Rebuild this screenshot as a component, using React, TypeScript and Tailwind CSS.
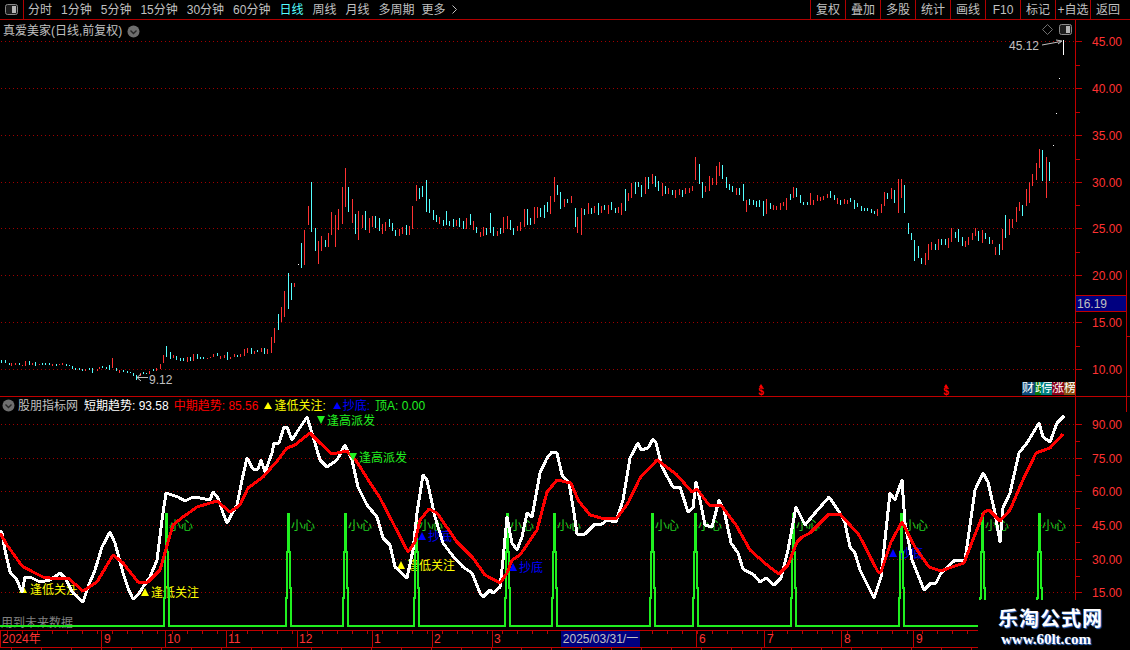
import React from 'react';

const LEFT_TABS = ['分时', '1分钟', '5分钟', '15分钟', '30分钟', '60分钟', '日线', '周线', '月线', '多周期'];
const RIGHT_TABS = ['复权', '叠加', '多股', '统计', '画线', 'F10', '标记', '+自选', '返回'];

const PRICE_LEVELS = [
  { y: 41, label: '45.00' }, { y: 88, label: '40.00' }, { y: 135, label: '35.00' }, { y: 182, label: '30.00' },
  { y: 228, label: '25.00' }, { y: 275, label: '20.00' }, { y: 322, label: '15.00' }, { y: 369, label: '10.00' },
];
const IND_LEVELS = [
  { y: 424, label: '90.00' }, { y: 458, label: '75.00' }, { y: 491, label: '60.00' },
  { y: 525, label: '45.00' }, { y: 559, label: '30.00' }, { y: 592, label: '15.00' },
];

// x top bottom colour, in crop units: [originX, originY, data]
const BARS: [number, number, string][] = [
  [0, 260, '4 300 309 c,16 300 309 c,26 309 315 c,34 309 318 r,46 309 315 r,56 309 315 c,65 315 318 r,76 303 318 r,86 303 315 c,97 309 315 r,106 306 318 c,116 312 315 r,127 309 315 c,136 309 315 c,146 309 315 c,157 312 318 r,167 312 318 c,176 312 315 r,187 309 315 r,197 312 318 c,207 315 318 c,217 318 327 c,226 324 330 c,238 324 330 c,247 327 333 c,256 327 333 r,268 324 330 c,277 324 339 c,290 327 333 r,298 321 327 r,307 318 324 c,319 321 327 c,328 315 330 c,337 294 324 r,349 324 333 c,358 330 339 r,370 330 336 c,380 333 339 c,389 336 339 c,400 339 348 c,409 345 360 c,419 339 348 r,430 336 342 c,439 339 342 c,448 333 342 r,460 327 333 c,469 324 333 r,481 312 327 r,490 285 309 r,499 258 291 c,511 276 297 c,520 285 294 r,529 288 300 c,541 294 303 c,550 294 303 c,562 291 306 r,571 291 303 c,580 282 303 r,592 282 297 c,601 291 297 c,610 291 297 c,622 294 297 r,631 291 294 r,640 282 291 r,652 279 288 c,661 288 297 r,673 285 294 r,682 276 300 c,691 291 297 r,703 282 291 r,712 285 291 c,721 282 291 r,733 267 288 r,742 264 279 r,754 264 282 c,763 273 282 r,772 270 276 c,784 264 276 r,793 264 282 c,802 267 282 r,814 231 279 r,823 204 249 r,835 162 210 c,844 141 186 r,853 93 171 r,865 39 147 c,874 69 120 c,883 69 81 r'],
  [280, 140, '55 372 375 w,64 309 384 c,73 270 375 r,85 198 255 r,94 126 276 c,106 264 333 c,115 303 372 r,124 288 333 r,136 300 321 c,145 279 321 r,154 216 285 r,166 225 321 r,175 207 270 r,187 141 252 r,196 84 201 r,205 141 216 c,217 177 249 r,226 222 282 c,235 213 300 r,247 225 264 r,256 213 270 c,268 234 279 r,277 228 261 r,286 228 264 c,298 234 273 c,307 252 282 r,316 246 273 r,328 237 261 c,337 249 273 c,346 270 288 c,358 267 288 r,367 261 282 r,379 255 285 c,388 258 285 r,397 198 267 r,409 135 183 r,418 144 177 c,427 138 171 c,439 120 216 c,448 177 219 c,460 210 240 c,469 225 246 c,478 231 252 r,490 240 258 c,499 213 255 c,508 243 258 c,520 237 261 c,529 240 258 r,538 234 261 c,550 243 267 c,559 234 267 r,571 222 255 c,580 243 270 r,589 261 279 c,601 276 291 r,610 261 288 r,619 264 285 c,631 219 279 c,640 261 288 c,652 273 288 r,661 264 282 c,670 231 279 r,682 228 267 r,691 240 270 c,700 264 285 c,712 258 273 r,721 246 273 r,733 207 261 r,742 207 255 c,751 234 255 c,763 201 252 r,772 201 234 r,781 204 231 c,793 195 234 c,802 186 216 c,811 168 222 r,823 111 186 r,832 135 165 c,841 156 207 c,853 177 201 r,862 177 189 c'],
  [570, 140, '4 168 189 r,14 204 261 c,22 231 279 r,34 204 285 r,43 207 225 c,55 189 222 r,64 204 222 c,73 198 219 r,85 189 225 c,94 198 219 r,103 195 210 c,115 195 222 r,124 186 210 c,136 204 219 c,145 201 219 r,154 189 225 r,166 147 213 c,175 159 183 r,184 129 174 r,196 126 162 c,205 126 141 c,214 135 171 c,226 111 162 r,235 111 147 c,247 102 132 r,256 108 141 c,265 123 153 c,277 129 168 r,286 138 162 c,295 144 162 r,307 150 165 c,316 150 174 r,328 147 165 r,337 150 171 c,346 144 162 r,358 144 159 r,367 138 153 r,376 51 120 r,388 72 132 c,397 126 174 c,406 138 156 r,418 108 153 r,427 114 135 r,439 78 135 r,448 66 108 r,457 75 117 c,469 111 144 c,478 132 150 c,487 138 156 c,499 144 165 r,508 144 165 c,520 132 183 c,529 180 216 r,538 177 195 c,550 180 195 c,559 183 201 c,568 180 201 c,580 183 228 c,589 177 222 r,601 189 207 c,610 195 210 r,619 198 210 r,631 189 210 r,640 186 198 r,649 174 210 r,661 162 180 c,670 141 174 r,679 144 171 c,691 165 189 c,700 186 195 c,712 186 195 c,721 159 195 r,730 180 195 r,742 165 183 r,751 171 183 r,760 168 180 r,772 162 174 r,781 153 174 c,793 165 180 c,802 174 192 r,811 180 195 c,823 177 192 r,832 180 192 r,841 174 186 c,853 180 207 c,862 189 201 c,873 198 213 c,883 204 213 c,892 204 213 c,904 207 219 c,913 213 222 c,922 207 228 r,934 192 219 r,943 156 198 r,952 159 177 c,964 144 177 r,973 150 189 c,985 117 219 r,994 117 174 r,1003 135 219 c,1015 249 282 c,1024 279 300 c,1033 300 363 c,1045 318 354 c,1054 354 372 c,1066 339 375 r,1075 312 360 r,1084 306 330 r,1096 312 330 c,1105 297 330 r,1114 297 315 c,1126 297 315 c,1135 294 324 r,1144 264 306 r,1156 276 294 c,1165 267 306 c,1177 291 318 c,1186 303 321 r,1195 291 315 r,1207 279 300 r,1216 264 288 r,1225 273 303 c,1237 270 309 r,1246 279 297 c,1258 291 312 c,1267 300 312 r,1276 321 345 r,1288 312 345 c,1297 267 330 r,1306 225 294 c,1318 237 285 r,1327 237 264 r,1339 201 246 r,1348 186 213 r,1357 195 228 c,1369 147 198 r,1378 126 189 r,1387 102 138 r,1399 69 120 r,1408 27 84 r,1417 30 123 c,1429 51 174 r,1438 66 123 c'],
];
const BAR_COLOR: Record<string, string> = { r: '#ff3232', c: '#54ffff', w: '#ffffff' };

const WHITE_LINE = '0,530 2,533 5,550 10,572 17,580 22,592 25,577 32,578 40,582 50,580 60,573 65,578 73,593 83,602 88,587 95,570 102,547 110,532 115,543 123,573 128,588 133,599 138,595 143,587 150,577 157,560 162,520 166,493 172,495 178,497 185,501 193,497 200,498 210,500 213,492 218,498 223,513 227,523 233,512 237,505 242,480 247,458 253,469 258,469 261,460 265,472 272,453 274,443 279,443 284,427 287,427 292,440 297,432 307,417 312,433 320,460 327,467 337,460 345,445 352,460 358,487 367,505 377,517 383,538 390,545 395,567 407,578 413,550 417,513 423,475 427,480 435,517 443,543 452,555 463,567 472,573 480,593 483,597 490,590 493,593 500,587 503,560 507,517 512,543 517,550 522,537 527,513 532,517 540,473 547,458 552,452 557,453 562,475 569,483 574,513 577,534 585,534 595,524 602,524 607,520 616,522 623,500 630,458 638,443 641,450 648,448 653,439 656,443 662,467 673,487 680,487 688,512 693,508 696,482 700,500 705,525 712,527 719,500 724,510 731,543 738,553 743,569 754,575 760,582 766,578 774,585 781,578 788,550 796,507 805,525 815,513 829,497 840,513 845,523 850,547 855,553 860,570 874,598 881,577 890,493 895,500 902,480 905,523 912,560 924,590 931,583 936,583 941,573 955,560 965,560 975,490 983,473 988,482 995,513 1000,542 1003,508 1010,493 1019,453 1027,443 1039,423 1043,437 1050,442 1057,423 1064,416';
const RED_LINE = '0,533 7,545 22,566 33,572 43,577 57,579 68,578 83,591 97,582 113,555 123,563 138,582 148,582 160,570 168,542 173,525 183,517 197,507 217,501 230,512 240,505 248,488 263,477 278,460 287,448 295,445 310,433 320,443 332,454 347,451 357,462 367,478 380,498 393,523 408,552 415,542 420,520 429,509 437,513 457,542 473,558 485,575 500,583 507,573 512,560 520,555 537,530 547,492 557,480 571,483 578,500 590,515 605,519 617,518 628,503 640,478 657,460 676,474 692,492 697,489 709,505 721,505 736,525 750,550 767,565 779,574 788,565 797,542 802,537 810,533 829,514 840,514 859,535 878,572 881,572 891,542 902,522 915,547 929,567 941,571 952,567 964,563 974,537 984,512 989,510 1000,521 1010,510 1022,482 1036,453 1050,448 1063,434';

const SPIKES = [166, 288, 345, 416, 507, 554, 652, 695, 793, 901, 982, 1039];

const MONTHS = [
  { x: 2, line: 0, t: '2024年' }, { x: 104, line: 101, t: '9' }, { x: 167, line: 165, t: '10' }, { x: 228, line: 226, t: '11' },
  { x: 299, line: 297, t: '12' }, { x: 374, line: 372, t: '1' }, { x: 434, line: 432, t: '2' }, { x: 494, line: 492, t: '3' },
  { x: 699, line: 696, t: '6' }, { x: 767, line: 764, t: '7' }, { x: 844, line: 841, t: '8' }, { x: 916, line: 913, t: '9' },
];

const Pair = ({ x, y, tri, text, color, down }: { x: number; y: number; tri: number; text: string; color: string; down?: boolean }) => (
  <g fill={color}>
    <polygon points={down ? `${tri - 4},${y - 4} ${tri + 4},${y - 4} ${tri},${y + 4}` : `${tri - 4},${y + 4} ${tri + 4},${y + 4} ${tri},${y - 4}`} />
    <text x={x} y={y + 5} fontSize="12">{text}</text>
  </g>
);

const ChevronDot = () => (
  <svg width="13" height="13" viewBox="0 0 13 13" className="shrink-0">
    <circle cx="6.5" cy="6.5" r="6" fill="#6e6e6e" />
    <path d="M3.5 5.5 L6.5 8.5 L9.5 5.5" fill="none" stroke="#262626" strokeWidth="1.4" />
  </svg>
);

const PanelIcon = () => (
  <svg width="13" height="11" viewBox="0 0 13 11">
    <rect x="0.5" y="0.5" width="12" height="10" rx="2" fill="#1c1c1c" stroke="#8a8a8a" />
    <rect x="7" y="2" width="4" height="7" fill="#b5b5b5" />
  </svg>
);

const Tri = () => (
  <svg width="8" height="7" viewBox="0 0 8 7" className="mr-[2px] fill-current"><polygon points="4,0 8,7 0,7" /></svg>
);

const Grid = ({ levels }: { levels: { y: number }[] }) => (
  <g stroke="#a00000" strokeDasharray="1 3" shapeRendering="crispEdges">
    {levels.map((l) => <line key={l.y} x1="1" x2="1075" y1={l.y + 0.5} y2={l.y + 0.5} />)}
  </g>
);

const Axis = ({ levels, top }: { levels: { y: number; label: string }[]; top: number }) => (
  <>
    <svg className="absolute left-0 top-0" width="14" height="100%">
      {levels.map((l, i) => (
        <g key={l.y} fill="#c00000">
          <rect x="0" y={l.y - top} width="6" height="1" />
          {i < levels.length - 1 && <rect x="0" y={Math.round((l.y + levels[i + 1].y) / 2) - top} width="4" height="1" />}
        </g>
      ))}
    </svg>
    {levels.map((l) => (
      <div key={l.y} className="absolute left-[15px] w-[31px] text-right text-[#ff3232]" style={{ top: l.y - top - 5 }}>{l.label}</div>
    ))}
  </>
);

export default function App() {
  return (
    <div className="relative w-[1130px] h-[650px] overflow-hidden bg-black text-[#c0c0c0] text-[12px] leading-none [font-family:'Liberation_Sans','Noto_Sans_CJK_SC',sans-serif]">
      {/* toolbar */}
      <div className="flex justify-between h-[20px] border-b border-[#b00000]">
        <div className="flex items-center">
          <div className="flex items-center justify-center w-[24px] h-full border-r border-[#b00000]"><PanelIcon /></div>
          <div className="flex items-center gap-[9px] ml-[4px]">
            {LEFT_TABS.map((t) => <span key={t} className={t === '日线' ? 'text-[#54ffff]' : ''}>{t}</span>)}
            <span className="ml-[-2px]">更多</span>
            <svg width="5" height="9" viewBox="0 0 5 9" className="ml-[-3px]"><path d="M0.5 0.5 L4.5 4.5 L0.5 8.5" fill="none" stroke="#c0c0c0" /></svg>
          </div>
        </div>
        <div className="flex">
          {RIGHT_TABS.map((t) => (
            <div key={t} className="flex items-center justify-center w-[35px] border-l border-[#b00000] whitespace-nowrap">{t}</div>
          ))}
          <div className="w-[5px]" />
        </div>
      </div>

      {/* price panel */}
      <div className="flex h-[377px] border-b border-[#c00000]">
        <div className="relative w-[1075px]">
          <svg className="absolute inset-0" width="1075" height="376" viewBox="0 20 1075 376">
            <Grid levels={PRICE_LEVELS} />
            <g shapeRendering="crispEdges">
              {BARS.flatMap(([ox, oy, data]) => data.split(',').map((s) => {
                const [x, t, b, c] = s.split(' ');
                const px = Math.round(ox + Number(x) / 3) + 0.5;
                return <line key={`${ox}-${x}`} x1={px} x2={px} y1={oy + Number(t) / 3} y2={oy + Number(b) / 3} stroke={BAR_COLOR[c]} />;
              }))}
              <rect x="1056" y="113" width="1" height="1" fill="#fff" />
              <rect x="1059" y="78" width="1" height="1" fill="#fff" />
              <rect x="1053" y="145" width="1" height="1" fill="#fff" />
              <rect x="1063" y="40" width="1" height="15" fill="#fff" />
            </g>
            <text x="1009" y="50" fontSize="12" fill="#c0c0c0">45.12</text>
            <path d="M1042 45 L1061 41.5 M1056 40 L1062 41 L1058 44" fill="none" stroke="#c0c0c0" />
            <text x="149" y="384" fontSize="12" fill="#c0c0c0">9.12</text>
            <path d="M148 377.5 H137 M141 374 L137 377.5 L141 381" fill="none" stroke="#c0c0c0" />
            {[761, 946].map((x) => (
              <g key={x} fill="#ff0000">
                <polygon points={`${x - 2},387 ${x + 2},387 ${x},384`} />
                <text x={x} y="395" fontSize="10" fontWeight="700" textAnchor="middle">$</text>
              </g>
            ))}
          </svg>
          <div className="relative flex items-center gap-[5px] h-[16px] mt-[3px] pl-[3px]">
            <span>真爱美家(日线,前复权)</span>
            <ChevronDot />
          </div>
          <div className="absolute right-[3px] top-[4px] flex items-center gap-[6px]">
            <svg width="11" height="11" viewBox="0 0 11 11"><path d="M5.5 0.5 L10.5 5.5 L5.5 10.5 L0.5 5.5 Z" fill="none" stroke="#707070" /></svg>
            <PanelIcon />
          </div>
          <div className="absolute right-0 bottom-[1px] flex h-[13px] text-white leading-[13px]">
            <span className="w-[13px] bg-[#0f4a7a] overflow-hidden">财</span>
            <span className="w-[6px] bg-[#0a7a0a] overflow-hidden">跌</span>
            <span className="w-[11px] bg-[#008080] overflow-hidden">停</span>
            <span className="w-[12px] bg-[#8a0018] overflow-hidden">涨</span>
            <span className="w-[11px] bg-[#8a5010] overflow-hidden">榜</span>
          </div>
        </div>
        <div className="relative w-[55px] border-l border-[#c00000]">
          <Axis levels={PRICE_LEVELS} top={20} />
          <div className="absolute left-0 right-[4px] top-[275px] h-[17px] flex items-center pl-[1px] bg-[#000080] border-y border-[#c00000]">16.19</div>
          <div className="absolute left-[50px] top-[250px] bottom-0 w-px bg-[#c00000]" />
          <div className="absolute left-[50px] right-0 top-[316px] h-px bg-[#c00000]" />
        </div>
      </div>

      {/* indicator panel */}
      <div className="flex h-[233px]">
        <div className="relative w-[1075px]">
          <svg className="absolute inset-0" width="1075" height="233" viewBox="0 397 1075 233">
            <Grid levels={IND_LEVELS} />
            <text x="1" y="627" fontSize="12" fill="#808080">用到未来数据</text>
            {SPIKES.map((c) => <text key={c} x={c + 3} y="530" fontSize="12" fill="#20d020">小心</text>)}
            <Pair tri={23} x={30} y={589} text="逢低关注" color="#ffff00" />
            <Pair tri={145} x={151} y={592} text="逢低关注" color="#ffff00" />
            <Pair tri={401} x={407} y={565} text="逢低关注" color="#ffff00" />
            <Pair tri={422} x={428} y={536} text="抄底" color="#0000ff" />
            <Pair tri={513} x={519} y={567} text="抄底" color="#0000ff" />
            <Pair tri={893} x={899} y={553} text="抄底" color="#0000ff" />
            <g fill="none" stroke="#20f020" strokeWidth="2" shapeRendering="crispEdges">
              <path d={`M0 626 ${SPIKES.map((c) => `H${c - 2.5} V598 H${c - 1.5} V552 H${c - 0.5} V514 H${c + 0.5} V552 H${c + 1.5} V588 H${c + 2.5} V626`).join(' ')} H1075`} />
            </g>
            <polyline points={WHITE_LINE} fill="none" stroke="#ffffff" strokeWidth="3" strokeLinejoin="round" shapeRendering="crispEdges" />
            <polyline points={RED_LINE} fill="none" stroke="#ff0000" strokeWidth="3" strokeLinejoin="round" shapeRendering="crispEdges" />
            <Pair tri={321} x={327} y={420} text="逢高派发" color="#20f020" down />
            <Pair tri={353} x={359} y={457} text="逢高派发" color="#20f020" down />
          </svg>
          <div className="relative flex items-center h-[16px] pt-[1px] pl-[2px] whitespace-nowrap">
            <ChevronDot />
            <span className="ml-[3px]">股朋指标网</span>
            <span className="ml-[6px] text-white">短期趋势: 93.58</span>
            <span className="ml-[5px] text-[#ff0000]">中期趋势: 85.56</span>
            <span className="flex items-center ml-[6px] text-[#ffff00]"><Tri />逢低关注:</span>
            <span className="flex items-center ml-[7px] text-[#0000ff]"><Tri />抄底:</span>
            <span className="ml-[5px] text-[#20f020]">顶A: 0.00</span>
          </div>
        </div>
        <div className="relative w-[55px] border-l border-[#c00000]">
          <Axis levels={IND_LEVELS} top={397} />
          <div className="absolute left-[50px] top-0 h-[15px] w-px bg-[#c00000]" />
        </div>
      </div>

      {/* date axis */}
      <div className="relative h-[20px] border-t border-[#c00000] text-[#ff3232]">
        <svg className="absolute inset-0" width="1130" height="20">
          <g fill="#c00000" shapeRendering="crispEdges">
            {Array.from({ length: 72 }, (_, i) => <rect key={i} x={7 + i * 15} y="0" width="1" height="3" />)}
            {Array.from({ length: 36 }, (_, i) => <rect key={i} x={11 + i * 30} y="17" width="1" height="3" />)}
            {MONTHS.map((m) => <rect key={m.line} x={m.line} y="0" width="1" height="16" />)}
            <rect x="0" y="16" width="1075" height="1" />
          </g>
        </svg>
        {MONTHS.map((m) => <span key={m.line} className="absolute top-[2px]" style={{ left: m.x }}>{m.t}</span>)}
        <div className="absolute left-[561px] top-0 w-[79px] h-[16px] flex items-center justify-center bg-[#000080] text-[#c0c0c0]">2025/03/31/一</div>
      </div>

      {/* watermark */}
      <div className="absolute right-0 bottom-0 w-[152px] h-[50px] flex flex-col items-center pt-[9px] pr-[7px] bg-black text-white font-bold">
        <div className="text-[20px] tracking-[1px] [text-shadow:1px_1px_1px_#3a78d8]">乐淘公式网</div>
        <div className="mt-[3px] mr-[9px] text-[15px] [font-family:'Liberation_Serif',serif] [text-shadow:1px_1px_1px_#3a78d8]">www.60lt.com</div>
      </div>
    </div>
  );
}
